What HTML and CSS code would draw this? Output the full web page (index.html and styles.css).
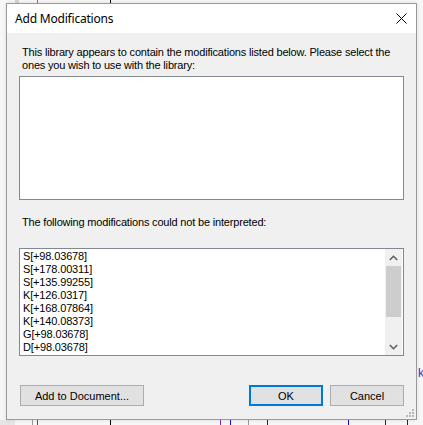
FILE: index.html
```html
<!DOCTYPE html>
<html>
<head>
<meta charset="utf-8">
<link rel="stylesheet" href="styles.css">
</head>
<body>
<div class="backdrop">
  <div class="bg-block bg-top-block"></div>
  <div class="bg-line bg-top-line1"></div>
  <div class="bg-line bg-top-line2"></div>
  <div class="bg-strip-left"></div>
  <div class="bg-line bg-b1"></div>
  <div class="bg-line bg-b2"></div>
  <div class="bg-line bg-b3"></div>
  <div class="bg-line bg-b4 purple"></div>
  <div class="bg-line bg-b5 blue"></div>
  <div class="bg-line bg-b6"></div>
  <div class="bg-line bg-b7 blue"></div>
  <div class="bg-line bg-b8 blue"></div>
  <div class="bg-line bg-b9 blue"></div>
  <div class="bg-line bg-b10 blue"></div>
  <span class="bg-k">k</span>
</div>
<div class="window">
  <div class="titlebar">
    <span class="title">Add Modifications</span>
    <svg class="close" width="11" height="11" viewBox="0 0 11 11"><path d="M0.5 0.5 L10.5 10.5 M10.5 0.5 L0.5 10.5" stroke="#000" stroke-width="1" fill="none"/></svg>
  </div>
  <div class="content">
    <p class="label label1">This library appears to contain the modifications listed below. Please select the<br>ones you wish to use with the library:</p>
    <div class="listbox list1"></div>
    <p class="label label2">The following modifications could not be interpreted:</p>
    <div class="listbox list2">
      <div class="items">
        <div class="item">S[+98.03678]</div>
        <div class="item">S[+178.00311]</div>
        <div class="item">S[+135.99255]</div>
        <div class="item">K[+126.0317]</div>
        <div class="item">K[+168.07864]</div>
        <div class="item">K[+140.08373]</div>
        <div class="item">G[+98.03678]</div>
        <div class="item">D[+98.03678]</div>
      </div>
      <div class="scrollbar">
        <div class="sb-btn"><svg width="9" height="6" viewBox="0 0 9 6"><path d="M0.8 5 L4.5 1.3 L8.2 5" stroke="#606060" stroke-width="1.6" fill="none"/></svg></div>
        <div class="sb-thumb"></div>
        <div class="sb-track"></div>
        <div class="sb-btn"><svg width="9" height="6" viewBox="0 0 9 6"><path d="M0.8 1 L4.5 4.7 L8.2 1" stroke="#606060" stroke-width="1.6" fill="none"/></svg></div>
      </div>
    </div>
    <div class="buttons">
      <button class="btn btn-add">Add to Document...</button>
      <span class="spacer"></span>
      <button class="btn btn-ok">OK</button>
      <button class="btn btn-cancel">Cancel</button>
    </div>
    <svg class="grip" width="10" height="10" viewBox="0 0 10 10" fill="#b8b8b8">
      <rect x="7" y="1" width="2" height="2"/>
      <rect x="4" y="4" width="2" height="2"/><rect x="7" y="4" width="2" height="2"/>
      <rect x="1" y="7" width="2" height="2"/><rect x="4" y="7" width="2" height="2"/><rect x="7" y="7" width="2" height="2"/>
    </svg>
  </div>
</div>
</body>
</html>
```

FILE: styles.css
```css
html, body {
  margin: 0;
  padding: 0;
}
body {
  width: 423px;
  height: 425px;
  overflow: hidden;
  background: #f7f7f7;
  position: relative;
  font-family: "Liberation Sans", Arial, sans-serif;
}
.backdrop {
  position: absolute;
  left: 0;
  top: 0;
  width: 423px;
  height: 425px;
}
.bg-block { position: absolute; background: #d4d4d4; }
.bg-top-block { left: 15px; top: 0; width: 4px; height: 3px; }
.bg-line { position: absolute; width: 1px; background: #333; }
.bg-top-line1 { left: 37px; top: 0; height: 3px; background: #777; }
.bg-top-line2 { left: 110px; top: 0; height: 3px; background: #000; }
.bg-strip-left { position: absolute; left: 0; top: 420px; width: 15px; height: 5px; background: #e6e6e6; }
.bg-b1 { left: 32px; top: 420px; height: 5px; background: #999; }
.bg-b2 { left: 37px; top: 420px; height: 5px; background: #555; }
.bg-b3 { left: 110px; top: 420px; height: 5px; background: #000; }
.bg-b4 { left: 220px; top: 420px; height: 5px; }
.bg-b5 { left: 230px; top: 420px; height: 5px; }
.bg-b6 { left: 248px; top: 420px; height: 5px; background: #999; }
.bg-b7 { left: 267px; top: 420px; height: 5px; }
.bg-b8 { left: 348px; top: 420px; height: 5px; }
.bg-b9 { left: 385px; top: 420px; height: 5px; }
.bg-b10 { left: 407px; top: 420px; height: 5px; }
.purple { background: #7a2bd6; }
.blue { background: #1010e0; }
.bg-k {
  position: absolute;
  left: 418px;
  top: 366px;
  font-size: 12px;
  color: #3030e0;
}

.window {
  position: relative;
  margin: 3px 0 0 6px;
  width: 411px;
  height: 417px;
  box-sizing: border-box;
  border: 1px solid #9a9a9a;
  background: #f0f0f0;
  display: flex;
  flex-direction: column;
  box-shadow: 0 0 4px rgba(0,0,0,0.12);
}
.titlebar {
  height: 29px;
  background: #ffffff;
  display: flex;
  align-items: center;
  justify-content: space-between;
}
.title {
  padding-left: 8px;
  font-family: "Noto Sans", "Open Sans", sans-serif;
  font-size: 12px;
  letter-spacing: -0.2px;
  color: #000;
}
.close {
  margin-right: 9px;
  display: block;
}
.content {
  flex: 1;
  padding: 0 12px;
  display: flex;
  flex-direction: column;
  position: relative;
}
.label {
  margin: 0;
  padding-left: 3px;
  font-size: 11px;
  line-height: 13px;
  letter-spacing: -0.18px;
  color: #000;
  white-space: nowrap;
}
.label1 { margin-top: 13px; }
.label2 { margin-top: 16px; }
.listbox {
  box-sizing: border-box;
  border: 1px solid #828790;
  background: #fff;
}
.list1 {
  margin-top: 4px;
  height: 124px;
}
.list2 {
  margin-top: 19px;
  height: 108px;
  display: flex;
}
.items {
  flex: 1;
  padding: 1px 0 0 3px;
}
.item {
  font-size: 11px;
  line-height: 13px;
  height: 13px;
  letter-spacing: -0.15px;
  color: #000;
}
.scrollbar {
  width: 17px;
  display: flex;
  flex-direction: column;
  background: #f0f0f0;
  margin-right: 1px;
}
.sb-btn {
  height: 17px;
  display: flex;
  align-items: center;
  justify-content: center;
}
.sb-btn svg { display: block; }
.sb-thumb {
  height: 51px;
  background: #cdcdcd;
  margin: 0 1px;
}
.sb-track { flex: 1; }
.buttons {
  margin-top: 29px;
  display: flex;
  padding-left: 1px;
}
.spacer { flex: 1; }
.btn {
  box-sizing: border-box;
  height: 21px;
  margin: 0;
  padding: 0;
  font-family: "Liberation Sans", Arial, sans-serif;
  font-size: 11px;
  color: #000;
  background: #e1e1e1;
  border: 1px solid #adadad;
}
.btn-add { width: 124px; }
.btn-ok {
  width: 74px;
  border: 2px solid #0078d7;
}
.btn-cancel {
  width: 74px;
  margin-left: 7px;
}
.grip {
  position: absolute;
  right: 1px;
  bottom: 1px;
}
```
